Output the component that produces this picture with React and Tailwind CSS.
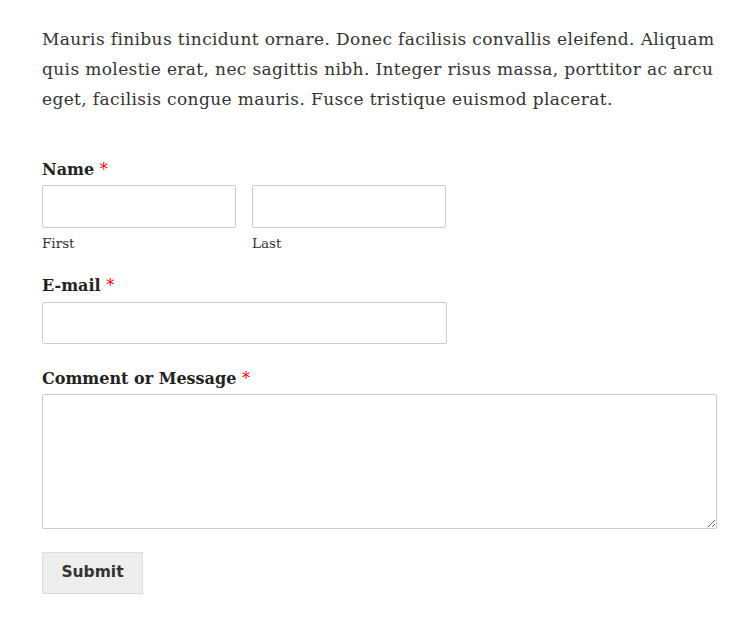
export default function App() {
  const serif = { fontFamily: '"DejaVu Serif", "Liberation Serif", serif' };
  return (
    <div className="w-[756px] min-h-[618px] bg-white text-[#2b2b2b]" style={serif}>
      <div className="pl-[42px] pr-[20px] pt-[24px]">
        <p className="whitespace-nowrap text-[17px] leading-[30px] tracking-[0.37px] text-[#333]">
          Mauris finibus tincidunt ornare. Donec facilisis convallis eleifend. Aliquam
          <br />
          quis molestie erat, nec sagittis nibh. Integer risus massa, porttitor ac arcu
          <br />
          eget, facilisis congue mauris. Fusce tristique euismod placerat.
        </p>

        <form className="mt-[44px] flex flex-col">
          <div className="flex flex-col">
            <label className="text-[16px] font-bold leading-[24px] text-[#222]">
              Name <span className="font-normal text-[#f00]">*</span>
            </label>
            <div className="mt-[3px] flex gap-[16px]">
              <div className="flex flex-col">
                <input className="h-[43px] w-[194px] rounded-[2px] border border-[#ccc] bg-white" />
                <span className="mt-[5px] text-[13.5px] leading-[20px] text-[#333]">First</span>
              </div>
              <div className="flex flex-col">
                <input className="h-[43px] w-[194px] rounded-[2px] border border-[#ccc] bg-white" />
                <span className="mt-[5px] text-[13.5px] leading-[20px] text-[#333]">Last</span>
              </div>
            </div>
          </div>

          <div className="mt-[21px] flex flex-col">
            <label className="text-[16px] font-bold leading-[24px] text-[#222]">
              E-mail <span className="font-normal text-[#f00]">*</span>
            </label>
            <input className="mt-[4px] h-[42px] w-[405px] rounded-[2px] border border-[#ccc] bg-white" />
          </div>

          <div className="mt-[23px] flex flex-col">
            <label className="text-[16px] font-bold leading-[24px] text-[#222]">
              Comment or Message <span className="font-normal text-[#f00]">*</span>
            </label>
            <textarea className="mt-[3px] block h-[135px] w-[675px] rounded-[2px] border border-[#ccc] bg-white" />
          </div>

          <div className="mt-[23px]">
            <button
              type="button"
              className="h-[42px] w-[101px] border border-[#ddd] bg-[#eee] text-[15.5px] font-bold text-[#333]"
              style={{ fontFamily: '"DejaVu Sans", "Liberation Sans", sans-serif' }}
            >
              Submit
            </button>
          </div>
        </form>
      </div>
    </div>
  );
}
